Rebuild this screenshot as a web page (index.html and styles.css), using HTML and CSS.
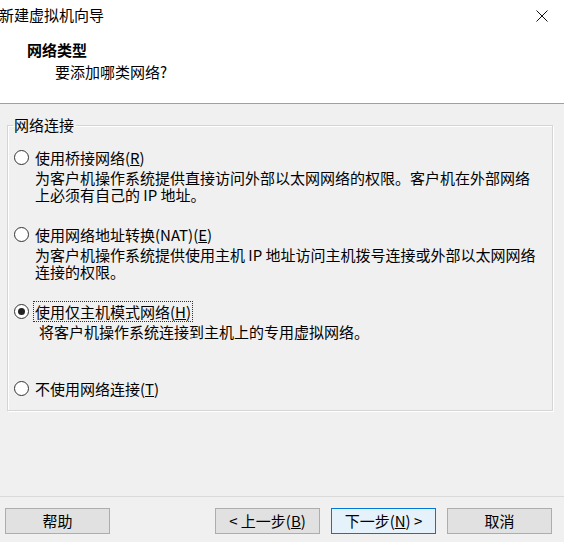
FILE: index.html
```html
<!DOCTYPE html>
<html lang="zh-CN">
<head>
<meta charset="utf-8">
<title>新建虚拟机向导</title>
<link rel="stylesheet" href="styles.css">
</head>
<body>
<div class="dialog">
  <div class="header">
    <div class="titlebar">
      <span class="title">新建虚拟机向导</span>
      <span class="close"><svg width="12" height="12" viewBox="0 0 12 12"><path d="M0.5 0.5 L11.5 11.5 M11.5 0.5 L0.5 11.5" stroke="#111" stroke-width="1" fill="none"/></svg></span>
    </div>
    <div class="heading">网络类型</div>
    <div class="subheading">要添加哪类网络?</div>
  </div>
  <div class="main">
    <fieldset class="group">
      <legend class="legend">网络连接</legend>
      <div class="option">
        <div class="opt-label"><span class="radio"></span><span class="text">使用桥接网络(<u>R</u>)</span></div>
        <div class="desc">
          <div class="line">为客户机操作系统提供直接访问外部以太网网络的权限。客户机在外部网络</div>
          <div class="line">上必须有自己的 IP 地址。</div>
        </div>
      </div>
      <div class="option">
        <div class="opt-label"><span class="radio"></span><span class="text">使用网络地址转换(NAT)(<u>E</u>)</span></div>
        <div class="desc">
          <div class="line">为客户机操作系统提供使用主机 IP 地址访问主机拨号连接或外部以太网网络</div>
          <div class="line">连接的权限。</div>
        </div>
      </div>
      <div class="option">
        <div class="opt-label"><span class="radio checked"></span><span class="text focus">使用仅主机模式网络(<u>H</u>)</span></div>
        <div class="desc desc-in">
          <div class="line">将客户机操作系统连接到主机上的专用虚拟网络。</div>
        </div>
      </div>
      <div class="option last">
        <div class="opt-label"><span class="radio"></span><span class="text">不使用网络连接(<u>T</u>)</span></div>
      </div>
    </fieldset>
  </div>
  <div class="footer">
    <button class="btn">帮助</button>
    <div class="spacer"></div>
    <button class="btn">&lt; 上一步(<u>B</u>)</button>
    <button class="btn primary">下一步(<u>N</u>) &gt;</button>
    <button class="btn">取消</button>
  </div>
</div>
</body>
</html>
```
FILE: styles.css
```css
* { box-sizing: border-box; }
html, body { margin: 0; padding: 0; }
body {
  width: 564px;
  height: 542px;
  overflow: hidden;
  background: #f0f0f0;
  font-family: "Noto Sans CJK SC", "Noto Sans", sans-serif;
  font-size: 15px;
  color: #000;
}
.dialog {
  display: flex;
  flex-direction: column;
  height: 542px;
}
.header {
  background: #fff;
  height: 104px;
  border-bottom: 1px solid #a0a0a0;
  flex: none;
}
.titlebar {
  display: flex;
  align-items: center;
  justify-content: space-between;
  height: 30px;
  line-height: 30px;
}
.title { margin-left: -1px; }
.close {
  display: flex;
  margin-right: 16px;
  margin-top: 1px;
}
.heading {
  font-weight: bold;
  line-height: 20px;
  margin-top: 10px;
  padding-left: 27px;
}
.subheading {
  line-height: 20px;
  margin-top: 2px;
  padding-left: 55px;
}
.main {
  flex: 1;
  padding: 0 11px 0 7px;
}
.group {
  margin: 11px 0 0 0;
  padding: 11px 0 10px 6px;
  border: 1px solid #d5d5d5;
  box-shadow: 1px 1px 0 #fff, inset 1px 1px 0 #fff;
  min-width: 0;
}
.legend {
  padding: 0 2px 0 1px;
  line-height: 20px;
  margin-left: -1px;
}
.option { margin-bottom: 20px; }
.option.last { margin-bottom: 0; }
.opt-label {
  display: flex;
  align-items: center;
  height: 23px;
  line-height: 23px;
}
.radio {
  position: relative;
  width: 15px;
  height: 15px;
  border: 1px solid #333;
  border-radius: 50%;
  background: #fff;
  flex: none;
  margin-right: 5px;
}
.radio.checked::after {
  content: "";
  position: absolute;
  left: 3px;
  top: 3px;
  width: 7px;
  height: 7px;
  border-radius: 50%;
  background: #222;
}
.text { padding: 0 1px; line-height: 19px; }
.text.focus { outline: 1px dotted #333; outline-offset: 0; }
.desc {
  padding-left: 21px;
  height: 34px;
}
.line {
  height: 17px;
  line-height: 17px;
  white-space: nowrap;
}
.desc.desc-in { padding-left: 25px; }
.footer {
  flex: none;
  height: 46px;
  border-top: 1px solid #dadada;
  display: flex;
  align-items: flex-start;
  padding: 11px 12px 8px 5px;
}
.spacer { flex: 1; }
.btn {
  width: 105px;
  height: 26px;
  font-family: inherit;
  font-size: 15px;
  line-height: 22px;
  padding: 0;
  background: #e1e1e1;
  border: 1px solid #adadad;
  color: #000;
}
.btn + .btn { margin-left: 11px; }
.btn.primary {
  background: #e5f1fb;
  border: 1px solid #0078d7;
}
```
